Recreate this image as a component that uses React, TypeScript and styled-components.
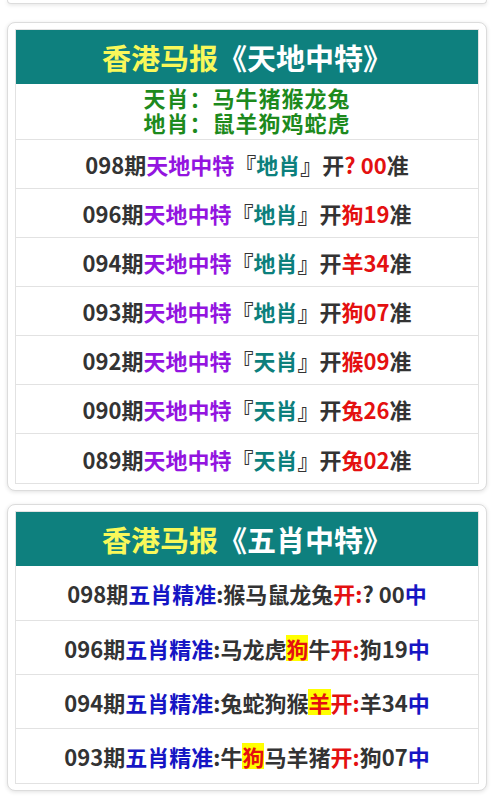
import React from 'react';
import styled, { createGlobalStyle } from 'styled-components';

const GlobalStyle = createGlobalStyle`
    body {
        margin: 0;
        background: #ffffff;
        font-family: "Noto Sans CJK SC", "Noto Sans", sans-serif;
    }
`

type Part = { t: string; c?: string; hl?: boolean };

const TIANDI: Part[][] = [
    [{ t: '098期' }, { t: '天地中特', c: 'purple' }, { t: '『' }, { t: '地肖', c: 'teal' }, { t: '』开' }, { t: '? 00', c: 'red' }, { t: '准' }],
    [{ t: '096期' }, { t: '天地中特', c: 'purple' }, { t: '『' }, { t: '地肖', c: 'teal' }, { t: '』开' }, { t: '狗19', c: 'red' }, { t: '准' }],
    [{ t: '094期' }, { t: '天地中特', c: 'purple' }, { t: '『' }, { t: '地肖', c: 'teal' }, { t: '』开' }, { t: '羊34', c: 'red' }, { t: '准' }],
    [{ t: '093期' }, { t: '天地中特', c: 'purple' }, { t: '『' }, { t: '地肖', c: 'teal' }, { t: '』开' }, { t: '狗07', c: 'red' }, { t: '准' }],
    [{ t: '092期' }, { t: '天地中特', c: 'purple' }, { t: '『' }, { t: '天肖', c: 'teal' }, { t: '』开' }, { t: '猴09', c: 'red' }, { t: '准' }],
    [{ t: '090期' }, { t: '天地中特', c: 'purple' }, { t: '『' }, { t: '天肖', c: 'teal' }, { t: '』开' }, { t: '兔26', c: 'red' }, { t: '准' }],
    [{ t: '089期' }, { t: '天地中特', c: 'purple' }, { t: '『' }, { t: '天肖', c: 'teal' }, { t: '』开' }, { t: '兔02', c: 'red' }, { t: '准' }],
];

const WUXIAO: Part[][] = [
    [{ t: '098期' }, { t: '五肖精准', c: 'blue' }, { t: ':猴马鼠龙兔' }, { t: '开:', c: 'red' }, { t: '? 00' }, { t: '中', c: 'blue' }],
    [{ t: '096期' }, { t: '五肖精准', c: 'blue' }, { t: ':马龙虎' }, { t: '狗', c: 'red', hl: true }, { t: '牛' }, { t: '开:', c: 'red' }, { t: '狗19' }, { t: '中', c: 'blue' }],
    [{ t: '094期' }, { t: '五肖精准', c: 'blue' }, { t: ':兔蛇狗猴' }, { t: '羊', c: 'red', hl: true }, { t: '开:', c: 'red' }, { t: '羊34' }, { t: '中', c: 'blue' }],
    [{ t: '093期' }, { t: '五肖精准', c: 'blue' }, { t: ':牛' }, { t: '狗', c: 'red', hl: true }, { t: '马羊猪' }, { t: '开:', c: 'red' }, { t: '狗07' }, { t: '中', c: 'blue' }],
];

const COLORS: Record<string, string> = {
    purple: '#9314e0',
    teal: '#0c7f7c',
    red: '#e41010',
    blue: '#1515c4',
};

const Title = ({ name }: { name: string }) => (
    <Header>
        <Yellow>香港马报</Yellow>《{name}》
    </Header>
)

export default function App() {
    return (
        <>
        <GlobalStyle />
        <Page>
            <StubCard />
            <Card>
                <Table>
                    <Title name="天地中特" />
                    <GreenBlock>
                        <div>天肖：马牛猪猴龙兔</div>
                        <div>地肖：鼠羊狗鸡蛇虎</div>
                    </GreenBlock>
                    {TIANDI.map((row, i) => (
                        <Row key={i} h={49}>
                            {row.map((p, j) => (
                                <Seg key={j} color={p.c ? COLORS[p.c] : undefined}>{p.t}</Seg>
                            ))}
                        </Row>
                    ))}
                </Table>
            </Card>
            <Card>
                <Table>
                    <Title name="五肖中特" />
                    {WUXIAO.map((row, i) => (
                        <Row key={i} h={i === 0 ? 55 : 54}>
                            {row.map((p, j) => (
                                <Seg key={j} color={p.c ? COLORS[p.c] : undefined} $hl={p.hl}>{p.t}</Seg>
                            ))}
                        </Row>
                    ))}
                </Table>
            </Card>
        </Page>
        </>
    )
}

const Page = styled.div`
    display: flex;
    flex-direction: column;
    gap: 13px;
    padding: 0 6px 12px 7px;
`
const Card = styled.div`
    background: #fff;
    border: 1px solid #dcdcdc;
    border-radius: 8px;
    box-shadow: 0 1px 4px rgba(0,0,0,0.12);
    padding: 6px 7px 6px 7px;
`
const StubCard = styled.div`
    height: 3px;
    background: #fff;
    border: 1px solid #dcdcdc;
    border-top: none;
    border-radius: 0 0 8px 8px;
    box-shadow: 0 1px 4px rgba(0,0,0,0.12);
    margin-bottom: 5px;
`
const Table = styled.div`
    border: 1px solid #e2e2e2;
    display: flex;
    flex-direction: column;
`
const Header = styled.div`
    height: 54px;
    background: #0e807e;
    color: #ffffff;
    font-size: 29px;
    font-weight: 700;
    display: flex;
    align-items: center;
    justify-content: center;
`
const Yellow = styled.span`
    color: #f8f85a;
`
const GreenBlock = styled.div`
    height: 56px;
    padding-bottom: 3px;
    display: flex;
    flex-direction: column;
    align-items: center;
    justify-content: center;
    color: #1d8a1d;
    font-size: 22px;
    letter-spacing: 1px;
    font-weight: 700;
    line-height: 25px;
    border-bottom: 1px solid #e2e2e2;
    box-sizing: border-box;
`
const Row = styled.div<{ h: number }>`
    height: ${p => p.h}px;
    box-sizing: border-box;
    display: flex;
    align-items: center;
    justify-content: center;
    font-size: 22px;
    font-weight: 700;
    color: #333333;
    white-space: nowrap;
    &:not(:last-child) {
        border-bottom: 1px solid #e2e2e2;
    }
`
const Seg = styled.span<{ color?: string; $hl?: boolean }>`
    color: ${p => p.color || 'inherit'};
    background: ${p => (p.$hl ? '#ffff00' : 'transparent')};
    line-height: 26px;
`
